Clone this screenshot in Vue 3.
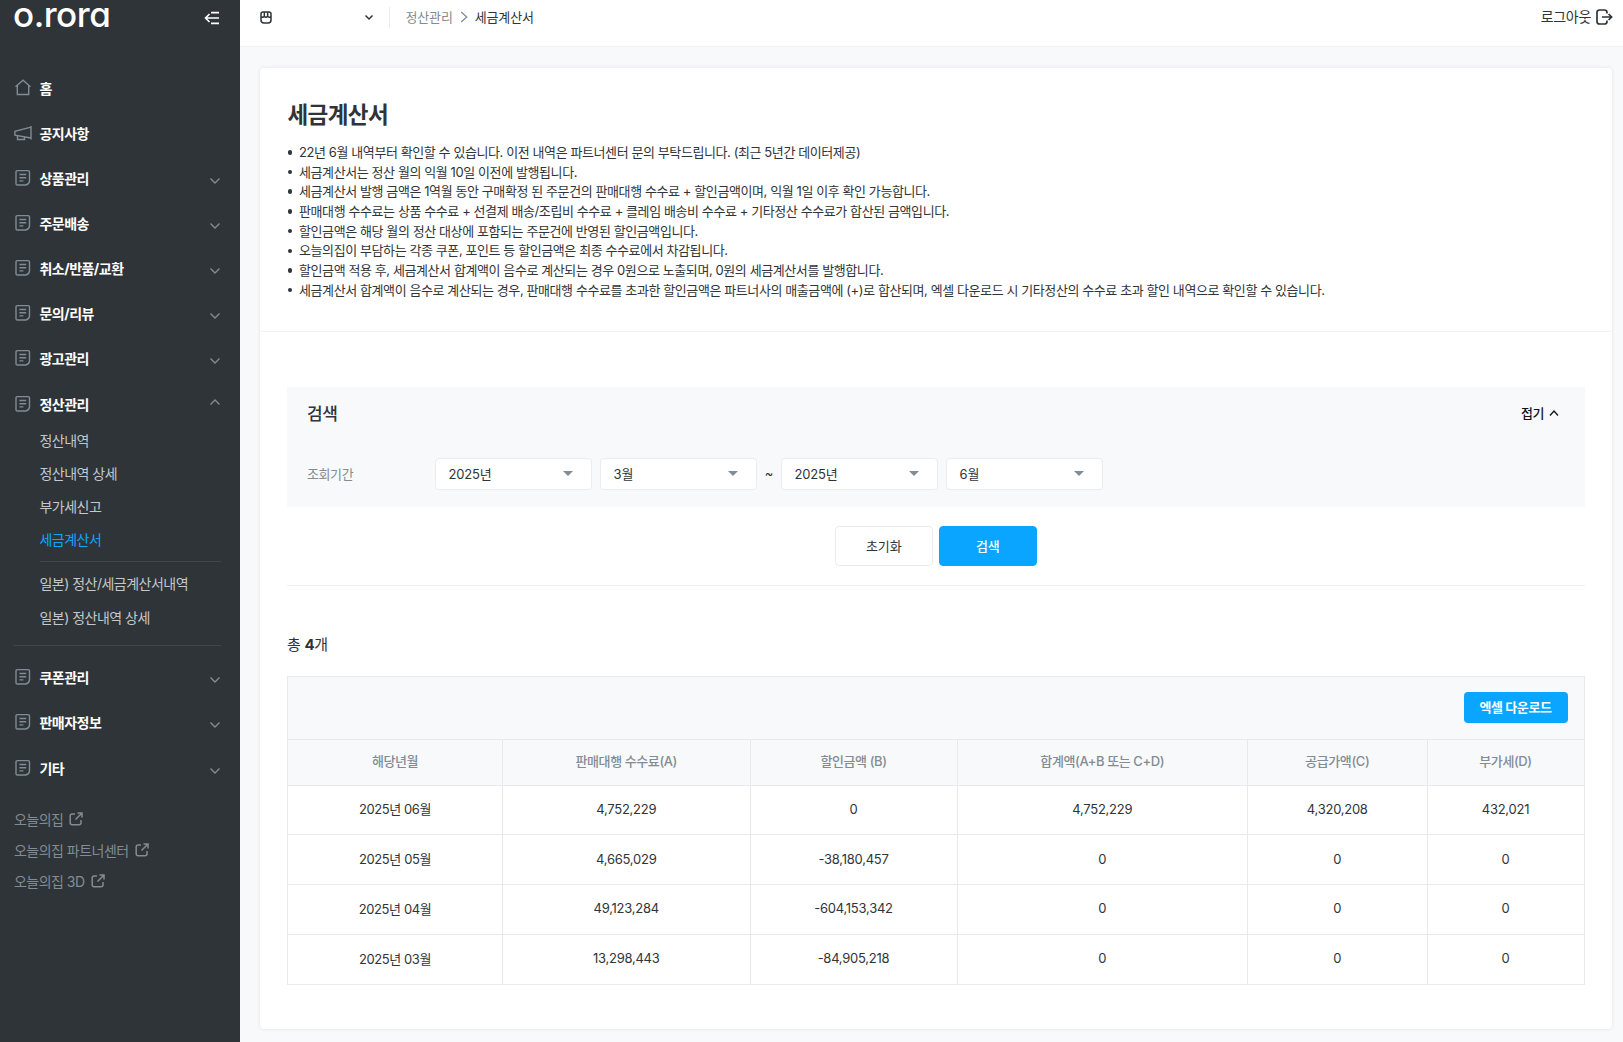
<script setup>
const topMenu = [
  { label: '홈', icon: 'home' },
  { label: '공지사항', icon: 'horn' },
  { label: '상품관리', icon: 'doc' },
  { label: '주문배송', icon: 'doc' },
  { label: '취소/반품/교환', icon: 'doc' },
  { label: '문의/리뷰', icon: 'doc' },
  { label: '광고관리', icon: 'doc' },
  { label: '정산관리', icon: 'doc', open: true },
]
const subMenu = ['정산내역', '정산내역 상세', '부가세신고', '세금계산서']
const japanMenu = ['일본) 정산/세금계산서내역', '일본) 정산내역 상세']
const bottomMenu = ['쿠폰관리', '판매자정보', '기타']
const links = ['오늘의집', '오늘의집 파트너센터', '오늘의집 3D']
const notices = [
  '22년 6월 내역부터 확인할 수 있습니다. 이전 내역은 파트너센터 문의 부탁드립니다. (최근 5년간 데이터제공)',
  '세금계산서는 정산 월의 익월 10일 이전에 발행됩니다.',
  '세금계산서 발행 금액은 1역월 동안 구매확정 된 주문건의 판매대행 수수료 + 할인금액이며, 익월 1일 이후 확인 가능합니다.',
  '판매대행 수수료는 상품 수수료 + 선결제 배송/조립비 수수료 + 클레임 배송비 수수료 + 기타정산 수수료가 합산된 금액입니다.',
  '할인금액은 해당 월의 정산 대상에 포함되는 주문건에 반영된 할인금액입니다.',
  '오늘의집이 부담하는 각종 쿠폰, 포인트 등 할인금액은 최종 수수료에서 차감됩니다.',
  '할인금액 적용 후, 세금계산서 합계액이 음수로 계산되는 경우 0원으로 노출되며, 0원의 세금계산서를 발행합니다.',
  '세금계산서 합계액이 음수로 계산되는 경우, 판매대행 수수료를 초과한 할인금액은 파트너사의 매출금액에 (+)로 합산되며, 엑셀 다운로드 시 기타정산의 수수료 초과 할인 내역으로 확인할 수 있습니다.',
]
const columns = ['해당년월', '판매대행 수수료(A)', '할인금액 (B)', '합계액(A+B 또는 C+D)', '공급가액(C)', '부가세(D)']
const rows = [
  ['2025년 06월', '4,752,229', '0', '4,752,229', '4,320,208', '432,021'],
  ['2025년 05월', '4,665,029', '-38,180,457', '0', '0', '0'],
  ['2025년 04월', '49,123,284', '-604,153,342', '0', '0', '0'],
  ['2025년 03월', '13,298,443', '-84,905,218', '0', '0', '0'],
]
</script>

<template>
  <div class="app">
    <aside class="sidebar">
      <div class="brand">
        <span class="logo">o.rora</span>
        <svg class="fold" width="16" height="14" viewBox="0 0 16 14">
          <path d="M7 1.600h8M1.500 7H15M7 12.400h8M5.500 3l-4 4 4 4" />
        </svg>
      </div>

      <nav>
        <div v-for="m in topMenu" :key="m.label" class="item">
          <svg v-if="m.icon === 'home'" class="ico" width="18" height="18" viewBox="0 0 18 18">
            <path d="M1.500 7.800 9 1.200l7.500 6.600M3.300 6.400v9.100h11.400V6.400" />
          </svg>
          <svg v-else-if="m.icon === 'horn'" class="ico" width="18" height="18" viewBox="0 0 18 18">
            <path d="M17 2v13.500M17 3.100.9 7.200v4L17 14M3.500 12v3.500h7v-2" />
          </svg>
          <svg v-else class="ico" width="18" height="18" viewBox="0 0 18 18">
            <path d="M3.300 1.600h10.900q1.300 0 1.300 1.300v9.200q-.5 3.400-3.900 3.900H3.300Q2 16 2 14.700V2.900q0-1.300 1.300-1.300zM5.400 5.500h6.800M5.400 8.700h6.800M5.400 11.900h4" />
          </svg>
          <span class="label">{{ m.label }}</span>
          <svg v-if="m.icon === 'doc'" class="chev" :class="{ up: m.open }" width="12" height="8" viewBox="0 0 12 8">
            <path d="m1.500 1.500 4.500 4.500 4.500-4.500" />
          </svg>
        </div>

        <div class="subs">
          <div v-for="s in subMenu" :key="s" class="sub" :class="{ active: s === '세금계산서' }">{{ s }}</div>
        </div>
        <div class="subs japan">
          <div v-for="s in japanMenu" :key="s" class="sub">{{ s }}</div>
        </div>
        <div class="rule"></div>

        <div v-for="m in bottomMenu" :key="m" class="item">
          <svg class="ico" width="18" height="18" viewBox="0 0 18 18">
            <path d="M3.300 1.600h10.900q1.300 0 1.300 1.300v9.200q-.5 3.400-3.900 3.900H3.300Q2 16 2 14.700V2.900q0-1.300 1.300-1.300zM5.400 5.500h6.800M5.400 8.700h6.800M5.400 11.900h4" />
          </svg>
          <span class="label">{{ m }}</span>
          <svg class="chev" width="12" height="8" viewBox="0 0 12 8">
            <path d="m1.500 1.500 4.500 4.500 4.500-4.500" />
          </svg>
        </div>
      </nav>

      <div class="links">
        <div v-for="l in links" :key="l" class="link">
          <span>{{ l }}</span>
          <svg width="14" height="14" viewBox="0 0 14 14">
            <path d="M6 2H3.200Q1.200 2 1.200 4v6.800q0 2 2 2H10q2 0 2-2V8M8.500 1h4.500v4.500M13 1 6.500 7.500" />
          </svg>
        </div>
      </div>
    </aside>

    <div class="page">
      <header class="topbar">
        <svg class="shop" width="12" height="13" viewBox="0 0 12 13">
          <path d="M1 5.500V3Q1 1 3 1h6q2 0 2 2v2.500q-.8.700-1.670.700T7.670 5.300Q7 6.200 6 6.200T4.330 5.300Q3.600 6.200 2.670 6.200T1 5.500zM4.330 1v4M7.670 1v4M1 5v4q0 3 3 3h4q3 0 3-3V5" />
        </svg>
        <svg class="pick" width="10" height="7" viewBox="0 0 10 7"><path d="m1.500 1.500 3.500 3.500 3.500-3.500" /></svg>
        <div class="crumbs">
          <span class="parent">정산관리</span>
          <svg width="8" height="12" viewBox="0 0 8 12"><path d="m1.200 1 5.500 5-5.500 5" /></svg>
          <span>세금계산서</span>
        </div>
        <div class="logout">
          <span>로그아웃</span>
          <svg width="17" height="16" viewBox="0 0 17 16">
            <path d="M11 4.500V3.500q0-2.500-2.500-2.500H3.500Q1 1 1 3.500v9Q1 15 3.500 15h5Q11 15 11 12.500v-1M6 8h9.500M12.600 5l3 3-3 3" />
          </svg>
        </div>
      </header>

      <main class="card">
        <section class="intro">
          <h1>세금계산서</h1>
          <ul>
            <li v-for="n in notices" :key="n">{{ n }}</li>
          </ul>
        </section>

        <section class="body">
          <div class="search">
            <div class="search-head">
              <h2>검색</h2>
              <div class="toggle">
                접기
                <svg width="10" height="8" viewBox="0 0 10 8"><path d="m1 6.500 4-4.500 4 4.500" /></svg>
              </div>
            </div>
            <div class="fields">
              <span class="field-label">조회기간</span>
              <div class="select"><span>2025년</span><i></i></div>
              <div class="select"><span>3월</span><i></i></div>
              <span class="tilde">~</span>
              <div class="select"><span>2025년</span><i></i></div>
              <div class="select"><span>6월</span><i></i></div>
            </div>
          </div>

          <div class="actions">
            <button class="btn">초기화</button>
            <button class="btn primary">검색</button>
          </div>

          <div class="total">총 <b>4</b>개</div>

          <div class="grid">
            <div class="tools"><button class="excel">엑셀 다운로드</button></div>
            <div class="row head">
              <div v-for="c in columns" :key="c" class="cell">{{ c }}</div>
            </div>
            <div v-for="r in rows" :key="r[0]" class="row">
              <div v-for="(c, i) in r" :key="i" class="cell">{{ c }}</div>
            </div>
          </div>
        </section>
      </main>
    </div>
  </div>
</template>

<style>
body {
  background: #f7f9fa;
  overflow: hidden;
}
</style>

<style scoped>
* {
  box-sizing: border-box;
}
.app {
  display: flex;
  width: 1623px;
  height: 1042px;
  overflow: hidden;
  font-family: Inter, 'Noto Sans CJK KR', sans-serif;
  font-size: 13px;
  letter-spacing: -0.41px;
  color: #2f3438;
  white-space: nowrap;
}
svg {
  flex: none;
  fill: none;
  stroke: currentColor;
}
.sidebar {
  flex: none;
  width: 239.500px;
  background: #2f3438;
  color: #fff;
  font-size: 14px;
  letter-spacing: -0.52px;
}
.brand {
  display: flex;
  justify-content: space-between;
  height: 65px;
  padding: 0 20px 0 13px;
}
.logo {
  font-size: 35px;
  line-height: 28px;
  height: 28px;
  font-weight: 500;
  letter-spacing: -0.500px;
  font-feature-settings: 'cv11';
}
.fold {
  margin-top: 10.500px;
  stroke-width: 1.600;
}
.item {
  display: flex;
  align-items: center;
  height: 45.150px;
  padding: 0 19px 0 14px;
}
.ico {
  color: #828c94;
  stroke-width: 1.400;
}
.label {
  flex: 1;
  margin-left: 7.500px;
  font-weight: 700;
}
.chev {
  color: #828c94;
  stroke-width: 1.400;
  margin-top: 6px;
}
.chev.up {
  transform: rotate(180deg);
  margin-top: -4px;
}
.subs {
  margin: -2.500px 19px 0 39.500px;
  color: #c2c8cc;
}
.sub {
  height: 33.200px;
  line-height: 33.200px;
}
.sub.active {
  color: #0aa5ff;
}
.japan {
  margin-top: 5px;
  padding-top: 5px;
  border-top: 1px solid #3f474d;
}
.rule {
  margin: 11.500px 19px 8.500px 14px;
  border-top: 1px solid #3f474d;
}
.links {
  margin-top: 13px;
  padding-left: 14px;
  color: #828c94;
}
.link {
  display: flex;
  align-items: center;
  gap: 6px;
  height: 31.300px;
}
.link svg {
  stroke-width: 1.500;
}
.page {
  flex: 1;
  min-width: 0;
}
.topbar {
  display: flex;
  align-items: center;
  height: 47px;
  padding: 0 10px 12px 20.500px;
  background: #fff;
  border-bottom: 1px solid #eff1f3;
}
.topbar span {
  padding-bottom: 2px;
}
.shop {
  stroke-width: 1.500;
}
.pick {
  margin: 0 15px 0 91.500px;
  stroke-width: 1.500;
}
.crumbs {
  display: flex;
  align-items: center;
  gap: 7px;
  height: 21px;
  padding-left: 16px;
  letter-spacing: -0.150px;
  border-left: 1px solid #eaedef;
}
.crumbs .parent,
.crumbs svg {
  color: #828c94;
}
.crumbs svg {
  stroke-width: 1.300;
}
.logout {
  display: flex;
  align-items: center;
  gap: 5px;
  margin-left: auto;
  font-size: 14px;
  letter-spacing: -0.300px;
}
.logout svg {
  stroke-width: 1.700;
}
.card {
  width: 1352.500px;
  height: 960.500px;
  margin: 21px 0 0 20px;
  background: #fff;
  border-radius: 4px;
  box-shadow: 0 0 3px 1px #e9edef;
}
.intro {
  height: 264px;
  padding: 30.500px 28px 0;
  border-bottom: 1px solid #eff1f3;
}
h1 {
  margin: 0 0 11px;
  font-size: 22.500px;
  line-height: 32px;
  font-weight: 700;
  letter-spacing: -0.600px;
}
ul {
  margin: 0;
  padding: 0;
  list-style: none;
}
li {
  display: flex;
  align-items: center;
  height: 19.700px;
}
li::before {
  content: '';
  width: 4.500px;
  height: 4.500px;
  margin: 2px 7px 0 0;
  border-radius: 50%;
  background: #2f3438;
}
.body {
  padding: 54.500px 27.500px 0 27.500px;
}
.search {
  height: 120.500px;
  padding: 14px 25.500px 0 20px;
  background: #f7f9fa;
}
.search-head {
  display: flex;
  align-items: center;
  justify-content: space-between;
  height: 24px;
}
h2 {
  margin: 0;
  font-size: 17px;
  font-weight: 500;
}
.toggle {
  display: flex;
  align-items: center;
  gap: 5px;
  color: #111417;
  font-weight: 500;
}
.toggle svg {
  stroke-width: 1.300;
}
.fields {
  display: flex;
  align-items: center;
  margin-top: 33px;
}
.field-label {
  width: 127.500px;
  padding-bottom: 1px;
  color: #828c94;
}
.select {
  display: flex;
  align-items: center;
  justify-content: space-between;
  width: 157.500px;
  height: 32px;
  padding: 0 18px 1px 13px;
  letter-spacing: -0.150px;
  background: #fff;
  border: 1px solid #eaedef;
  border-radius: 4px;
}
.select + .select {
  margin-left: 7.500px;
}
.select i {
  border: 5px solid transparent;
  border-top-color: #828c94;
  border-bottom: 0;
}
.tilde {
  width: 23.500px;
  padding-bottom: 2px;
  text-align: center;
}
.actions {
  display: flex;
  justify-content: center;
  gap: 6px;
  height: 79px;
  padding-top: 19px;
  border-bottom: 1px solid #eff1f3;
}
button {
  padding: 0;
  font: inherit;
  letter-spacing: inherit;
}
.btn {
  width: 98px;
  height: 40px;
  padding-bottom: 2px;
  background: #fff;
  border: 1px solid #eaedef;
  border-radius: 4px;
  color: #2f3438;
  letter-spacing: -0.200px;
}
.primary {
  background: #0aa5ff;
  border-color: #0aa5ff;
  color: #fff;
  font-weight: 500;
}
.total {
  height: 90px;
  padding-top: 48px;
  line-height: 22px;
  font-size: 15px;
  letter-spacing: -0.300px;
}
.grid {
  width: 1297.500px;
  border: 1.500px solid #e6eaec;
  border-bottom: 0;
}
.tools {
  display: flex;
  justify-content: flex-end;
  height: 62px;
  padding: 15px 16px 0 0;
  background: #f7f9fa;
}
.excel {
  width: 104px;
  height: 31px;
  padding-bottom: 2px;
  background: #0aa5ff;
  border: 0;
  border-radius: 4px;
  color: #fff;
  font-weight: 700;
}
.row {
  display: grid;
  grid-template-columns: 214px 247.500px 207px 290.500px 179.500px 1fr;
  height: 49.800px;
  border-bottom: 1.500px solid #e6eaec;
}
.row.head {
  height: 46.500px;
  background: #f7f9fa;
  border-top: 1px solid #e6eaec;
  color: #828c94;
  font-weight: 500;
}
.cell {
  display: flex;
  align-items: center;
  justify-content: center;
  padding-bottom: 2px;
}
.row.head .cell {
  padding-bottom: 3px;
}
.row:not(.head) .cell:not(:first-child) {
  letter-spacing: -0.250px;
}
.cell + .cell {
  border-left: 1px solid #e6eaec;
}
</style>
